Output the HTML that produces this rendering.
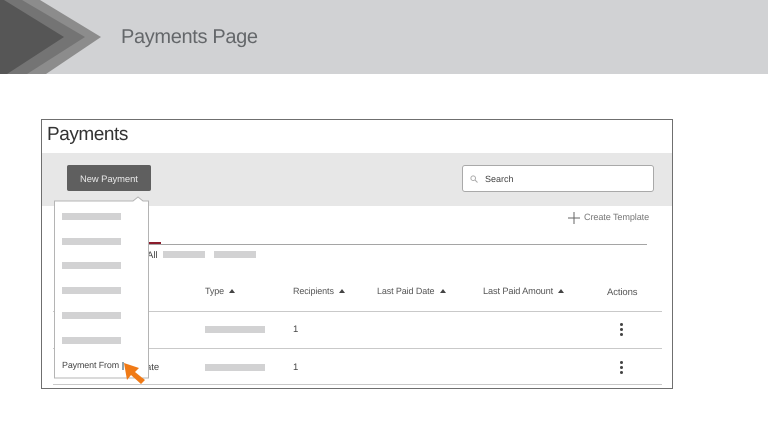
<!DOCTYPE html>
<html><head><meta charset="utf-8"><style>
html,body{margin:0;padding:0;width:768px;height:432px;overflow:hidden;background:#fff}
body{position:relative;font-family:"Liberation Sans",sans-serif;text-rendering:geometricPrecision}
.a{position:absolute}
.t{position:absolute;white-space:nowrap;line-height:1;color:#555}
.b{position:absolute;background:#d2d2d3}
.l{position:absolute;height:1px;background:#c9c9c9}
.d{position:absolute;width:3px;height:3px;border-radius:50%;background:#444}
.u{position:absolute;width:0;height:0;border-left:3px solid transparent;border-right:3px solid transparent;border-bottom:4px solid #444}
.h{font-size:9px;letter-spacing:-.12px}
</style></head><body>
<div class="a" style="left:0;top:0;width:768px;height:74px;background:#d1d2d4"></div>
<svg class="a" style="left:0;top:0" width="110" height="74">
<polygon points="0,0 40,0 101,37 46,74 0,74" fill="#8c8c8c"/>
<polygon points="0,0 22,0 85,37 27,74 0,74" fill="#747474"/>
<polygon points="0,0 4,0 64,37 7,74 0,74" fill="#565656"/>
</svg>
<div class="t" style="left:121px;top:27px;font-size:20px;letter-spacing:-.35px;color:#64676a">Payments Page</div>

<div class="a" style="left:41px;top:119px;width:630px;height:268px;border:1px solid #6f6f6f;background:#fff"></div>
<div class="t" style="left:47px;top:125px;font-size:19px;letter-spacing:-.45px;color:#333">Payments</div>
<div class="a" style="left:42px;top:153px;width:630px;height:53px;background:#e7e7e7"></div>
<div class="a" style="left:67px;top:165px;width:84px;height:26px;border-radius:2px;background:#5f5f5f"></div>
<div class="t" style="left:80px;top:174px;font-size:9.4px;letter-spacing:-.05px;color:#e8e8e8">New Payment</div>

<div class="a" style="left:462px;top:165px;width:190px;height:25px;border:1px solid #a9a9a9;border-radius:3px;background:#fff"></div>
<svg class="a" style="left:470px;top:175px" width="8" height="8"><circle cx="3.2" cy="3.2" r="2.3" fill="none" stroke="#aaa"/><path d="M5 5L7.5 7.5" stroke="#aaa"/></svg>
<div class="t" style="left:485px;top:174.500px;font-size:9px;color:#444">Search</div>

<svg class="a" style="left:568px;top:212px" width="12" height="12"><path d="M6 0V12M0 6H12" stroke="#666" stroke-width="1"/></svg>
<div class="t" style="left:584px;top:213px;font-size:9.1px;letter-spacing:-.1px;color:#777">Create Template</div>

<div class="a" style="left:148px;top:244px;width:499px;height:1px;background:#a5a5a5"></div>
<div class="a" style="left:148px;top:242px;width:13px;height:2px;background:#8b1c2c"></div>
<div class="t" style="left:147px;top:251px;font-size:9.5px;color:#444">All</div>
<div class="b" style="left:163px;top:251px;width:42px;height:7px"></div>
<div class="b" style="left:214px;top:251px;width:42px;height:7px"></div>

<div class="t h" style="left:205px;top:287px">Type</div><div class="u" style="left:229px;top:289px"></div>
<div class="t h" style="left:293px;top:287px">Recipients</div><div class="u" style="left:339px;top:289px"></div>
<div class="t h" style="left:377px;top:287px">Last Paid Date</div><div class="u" style="left:440px;top:289px"></div>
<div class="t" style="left:483px;top:287px;font-size:9.2px;letter-spacing:-.12px">Last Paid Amount</div><div class="u" style="left:558px;top:289px"></div>
<div class="t" style="left:607px;top:288px;font-size:9.5px;letter-spacing:-.1px">Actions</div>

<div class="l" style="left:53px;top:311px;width:609px"></div>
<div class="l" style="left:53px;top:348px;width:609px"></div>
<div class="l" style="left:53px;top:384px;width:609px"></div>

<div class="b" style="left:205px;top:326px;width:60px;height:7px"></div>
<div class="b" style="left:205px;top:364px;width:60px;height:7px"></div>
<div class="t" style="left:293px;top:325px;font-size:9.5px;color:#444">1</div>
<div class="t" style="left:293px;top:363px;font-size:9.5px;color:#444">1</div>
<div class="d" style="left:620px;top:323px"></div><div class="d" style="left:620px;top:328px"></div><div class="d" style="left:620px;top:333px"></div>
<div class="d" style="left:620px;top:361px"></div><div class="d" style="left:620px;top:366px"></div><div class="d" style="left:620px;top:371px"></div>
<div class="t" style="left:146px;top:363px;font-size:9.5px;color:#444">ate</div>

<svg class="a" style="left:54px;top:196px" width="96" height="184">
<path d="M.5 5H79L84 1L89 5H94.5V182H.5Z" fill="#fff" stroke="#b4b4b4"/>
</svg>
<div class="b" style="left:62px;top:213px;width:59px;height:7px"></div>
<div class="b" style="left:62px;top:238px;width:59px;height:7px"></div>
<div class="b" style="left:62px;top:262px;width:59px;height:7px"></div>
<div class="b" style="left:62px;top:287px;width:59px;height:7px"></div>
<div class="b" style="left:62px;top:312px;width:59px;height:7px"></div>
<div class="b" style="left:62px;top:337px;width:59px;height:7px"></div>
<div class="t" style="left:62px;top:361px;font-size:8.9px;letter-spacing:-.1px;color:#444">Payment From</div>
<div class="a" style="left:122px;top:362px;width:2px;height:8px;background:#8fa3ad"></div>
<svg class="a" style="left:120px;top:360px" width="28" height="26">
<path d="M4 3L19 8L15 12L25 20L21 24L11 15L7 20Z" fill="#f07a16"/>
</svg>
</body></html>
